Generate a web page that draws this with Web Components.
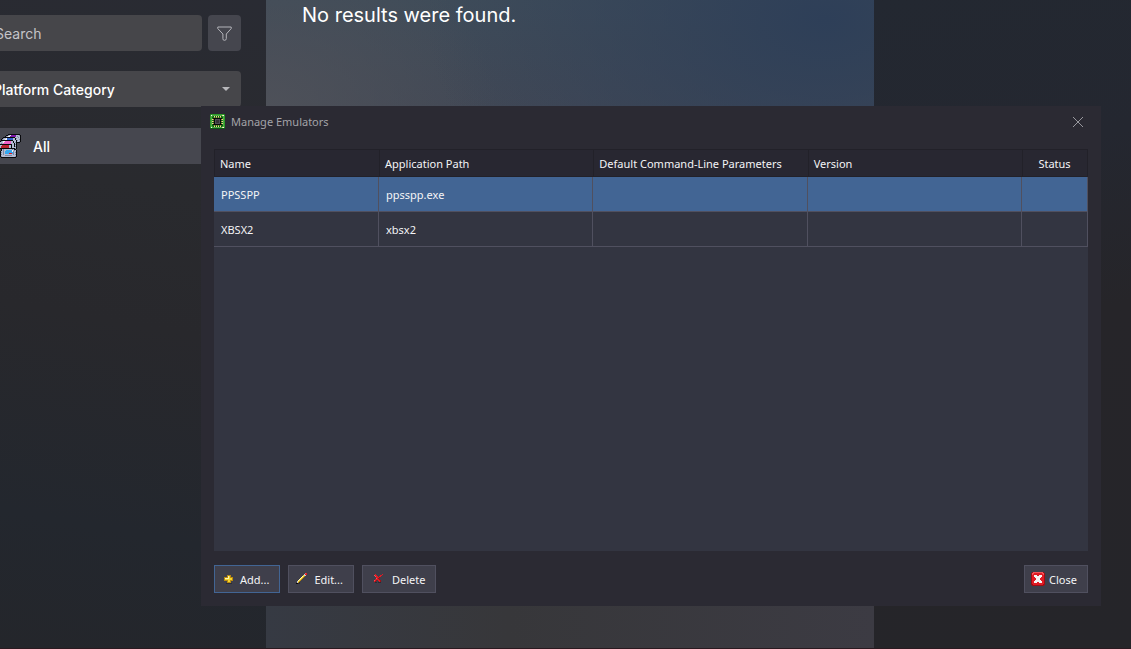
<!DOCTYPE html>
<html lang="en">
<head>
<meta charset="utf-8">
<title>Manage Emulators</title>
<style>
  html, body {
    margin: 0;
    height: 100%;
    overflow: hidden;
    background-color: #24262d;
  }
</style>
</head>
<body>
<launcher-app>
  <side-bar slot="side"></side-bar>
  <results-panel>No results were found.</results-panel>
  <manage-dialog slot="dialog" heading="Manage Emulators">
    <emulator-grid></emulator-grid>
    <tool-button slot="actions" icon="add" focused>Add...</tool-button>
    <tool-button slot="actions" icon="edit">Edit...</tool-button>
    <tool-button slot="actions" icon="remove">Delete</tool-button>
    <tool-button slot="close" icon="close">Close</tool-button>
  </manage-dialog>
</launcher-app>

<script>
// Pixel icons: one character per pixel, looked up in the palette
const PALETTE = {
  k: '#08090c', d: '#0c5a12', D: '#1c7a1a', g: '#2f9a2b', l: '#4fae42', y: '#ecd896', o: '#b09a48',
  c: '#343438', e: '#505055', Y: '#f6d631', W: '#fff6b0', O: '#b98a10', s: '#2b2b34',
  r: '#e01b24', R: '#9c0d14', p: '#f0545a', w: '#f4f4f4', n: '#c9cbd0', v: '#7d16a8',
  b: '#2f62c8', m: '#ef62c8', u: '#b4bdd4', h: '#7d87a3', B: '#35a8f0', x: '#bb2230'
};

const ICONS = {
  chip: [
    'DgggggggggggggD',
    'gwllllllllllywg',
    'glgdydydydydglg',
    'gldDoDoDoDoDdlg',
    'glDkkkkkkkkkDlg',
    'glyokeeeeekoylg',
    'glDdkecccekdDlg',
    'glyokecccekoylg',
    'glDdkecccekdDlg',
    'glyokeeeeekoylg',
    'glDkkkkkkkkkDlg',
    'gldDoDoDoDoDdlg',
    'glgdydydydydglg',
    'gwllllllllllywg',
    'ddddddddddddddd'
  ],
  add: [
    '...............',
    '......OOOO.....',
    '......OWYO.....',
    '...OOOOWYOOO...',
    '...OWWWWYYYO...',
    '...OYYYYYYYO...',
    '...OOOOYYOOO...',
    '......OYYO.....',
    '......OOOO.....',
    '.....ssssss....'
  ],
  edit: [
    '..........pr...',
    '.........nrr...',
    '........Ynn....',
    '.......WYO.....',
    '......WYO......',
    '.....WYO.......',
    '....WYO........',
    '...WYO.........',
    '..nYO..........',
    '..nOs..........',
    '.kkss..........',
    '...............'
  ],
  remove: [
    '...................',
    '......r......r.....',
    '.....prr...rr......',
    '......prr.rr.......',
    '.......rrrR........',
    '.......prR.........',
    '......rrrrR........',
    '.....prR.rrR.......',
    '.....rR...rR.......',
    '......ss.sss.......',
    '...................',
    '...................'
  ],
  close: [
    '.RppppppppppR.',
    'RpprrrrrrrrppR',
    'RprrrrrrrrrrpR',
    'RrrwwwrrwwwrrR',
    'RrrwwwwwwwwrrR',
    'RrrrwwwwwwrrrR',
    'RrrrrwwwwrrrrR',
    'RrrrrwwwwrrrrR',
    'RrrrwwwwwwrrrR',
    'RrrwwwwwwwwrrR',
    'RrrwwwrrwwwrrR',
    'RrrrrrrrrrrrrR',
    'RRrrrrrrrrrrRR',
    '.RRRRRRRRRRRR.'
  ],
  games: [
    '........kkkkkkkkkkkk.',
    '......kkhuwvvvvvuuuhk',
    '.....khuwwvvvvvvuhuuk',
    '...kkkkkkkkkkkkuuuhuk',
    '..khuuwbbbbbbuukhuuuk',
    '.khuuwwbbbbbbuukuuuhk',
    '.kkkkkkkkkkkkuuukhuuk',
    'khuwwmmmmmmuukuukuuhk',
    'uuuwmmmmmmmuukuhkkkk.',
    'uhummmmmmmmuuukuk....',
    'kkkkkkkkkkkkuukhk....',
    'uuxxxxxxxuukuukuk....',
    'uxxxxxxxxuukuukhk....',
    'uxxxxxxxxuukuuuuk....',
    'kkkkkkkkkkkkkkkhk....',
    '.kuhuuuuuuuuhukk.....',
    '.kuhuuBBBBBBwuhuk....',
    'kuuhuBBBBBBBwhuuk....',
    'khuhuBBBBBBBBhuhk....',
    'kuuhuBBBBrrrBhuuk....',
    'khuhuuuuuuuuuhuhk....',
    'kuuuuhhhhhhhuuuuk....',
    'khuuuuuuuuuuuuuhk....',
    '.kkkkkkkkkkkkkkk.....'
  ]
};

class PixelIcon extends HTMLElement {
  constructor() {
    super();
    this.attachShadow({ mode: 'open' });
  }

  connectedCallback() {
    const rows = ICONS[this.getAttribute('name')];
    const width = rows[0].length;
    let rects = '';
    rows.forEach((row, y) => {
      [...row].forEach((key, x) => {
        if (key !== '.') {
          rects += `<rect x="${x}" y="${y}" width="1" height="1" fill="${PALETTE[key]}"/>`;
        }
      });
    });
    this.shadowRoot.innerHTML = `
      <style>
        :host { display: block; flex: none; }
        svg { display: block; }
      </style>
      <svg width="${width}" height="${rows.length}" viewBox="0 0 ${width} ${rows.length}" shape-rendering="crispEdges" aria-hidden="true">${rects}</svg>
    `;
  }
}

class LauncherApp extends HTMLElement {
  constructor() {
    super();
    this.attachShadow({ mode: 'open' }).innerHTML = `
      <style>
        :host {
          display: flex;
          position: relative;
          box-sizing: border-box;
          height: 100vh;
          overflow: hidden;
          border-bottom: 1px solid #2a1a20;
          color: #fff;
          font-family: Inter, "Open Sans", sans-serif;
        }
        .side {
          flex: 0 0 266px;
          min-width: 0;
          background: linear-gradient(190deg, #292b33, #292a2e 30%, #28282c 50%, #23272e 80%, #24262b);
        }
        .main { flex: 1; display: flex; }
        .details {
          flex: 0 0 257px;
          background: linear-gradient(170deg, #232831, #242730 25%, #262529 50%, #252529);
        }
      </style>
      <div class="side"><slot name="side"></slot></div>
      <main class="main"><slot></slot></main>
      <div class="details"></div>
      <slot name="dialog"></slot>
    `;
  }
}

class SideBar extends HTMLElement {
  constructor() {
    super();
    this.attachShadow({ mode: 'open' }).innerHTML = `
      <style>
        :host {
          display: flex;
          flex-direction: column;
          gap: 20px;
          margin-left: -24px;
          padding: 15px 25px 0 0;
          font-size: 14px;
        }
        .row { display: flex; gap: 6px; }
        input, select, button {
          box-sizing: border-box;
          height: 36px;
          margin: 0;
          border: 0;
          border-radius: 4px;
          background-color: #46464a;
          font: inherit;
          color: #fff;
        }
        input { flex: 1; min-width: 0; padding: 0 19px; }
        input::placeholder { color: #c4c4c8; opacity: 1; }
        button {
          display: flex;
          align-items: center;
          justify-content: center;
          width: 33px;
          padding: 0;
          background-color: #45464e;
        }
        .category { display: grid; align-items: center; }
        .category > * { grid-area: 1 / 1; }
        select {
          width: 100%;
          padding: 0 17px;
          appearance: none;
          font-weight: 500;
        }
        .category svg { justify-self: end; margin-right: 11px; pointer-events: none; }
        ul { margin: 0; padding: 0; list-style: none; }
        a {
          display: flex;
          align-items: center;
          gap: 12px;
          height: 36px;
          margin-top: 1px;
          padding-left: 24px;
          background-color: #46474f;
          color: #fff;
          font-weight: 500;
          text-decoration: none;
        }
      </style>
      <div class="row">
        <input type="search" placeholder="Search" aria-label="Search">
        <button type="button" aria-label="Filter">
          <svg width="15" height="15" viewBox="0 0 15 15" fill="none" stroke="#b4b4ba" stroke-linejoin="round">
            <path d="M.8 1h13.4v1.6L9.3 8v4.6q0 1.7-1.8 1.7T5.9 12.6V8L.8 2.6z"/>
          </svg>
        </button>
      </div>
      <div class="category">
        <select aria-label="Category"><option>Platform Category</option></select>
        <svg width="8" height="4" viewBox="0 0 8 4" fill="#b8b8bc"><path d="M0 0h8L4 4z"/></svg>
      </div>
      <ul>
        <li><a href="#all"><pixel-icon name="games"></pixel-icon>All</a></li>
      </ul>
    `;
  }
}

class ResultsPanel extends HTMLElement {
  constructor() {
    super();
    this.attachShadow({ mode: 'open' }).innerHTML = `
      <style>
        :host {
          display: block;
          flex: 1;
          padding: 0 36px;
          font-size: 20px;
          line-height: 30px;
          background:
            radial-gradient(ellipse 400px 260px at 92% 3%, #2e3f58, transparent),
            radial-gradient(ellipse 230px 180px at 0 17%, #4e5159, transparent),
            linear-gradient(90deg, #363a43, #37373a 40%, #3c3b43) 0 100% / 100% 60px no-repeat,
            linear-gradient(180deg, #3f4c59 0, #424855 17%, #363a44 90%);
        }
        p { margin: 0; }
      </style>
      <p><slot></slot></p>
    `;
  }
}

class ManageDialog extends HTMLElement {
  constructor() {
    super();
    this.attachShadow({ mode: 'open' }).innerHTML = `
      <style>
        /* floats over the main window */
        :host {
          position: absolute;
          inset: 106px 30px 42px 201px;
          display: flex;
          flex-direction: column;
          box-sizing: border-box;
          padding: 0 13px 13px;
          background-color: #2b2a33;
          color: #f4f4f6;
          font: 11px/16px "Noto Sans", "Open Sans", sans-serif;
        }
        header {
          display: flex;
          align-items: center;
          gap: 6px;
          height: 31px;
          margin: 0 0 12px -4px;
        }
        h1 { flex: 1; margin: 0; font: inherit; color: #a3a3a8; }
        header button {
          margin: 0;
          padding: 4px;
          border: 0;
          background: none;
        }
        svg { display: block; }
        .body { flex: 1; display: flex; }
        footer { display: flex; gap: 8px; margin-top: 14px; }
        .close { margin-left: auto; }
      </style>
      <header>
        <pixel-icon name="chip"></pixel-icon>
        <h1></h1>
        <button type="button" aria-label="Close window">
          <svg width="12" height="12" viewBox="0 0 12 12" stroke="#98989e"><path d="M1 1l10 10M11 1L1 11"/></svg>
        </button>
      </header>
      <div class="body"><slot></slot></div>
      <footer>
        <slot name="actions"></slot>
        <div class="close"><slot name="close"></slot></div>
      </footer>
    `;
  }

  connectedCallback() {
    this.setAttribute('role', 'dialog');
    this.shadowRoot.querySelector('h1').textContent = this.getAttribute('heading');
  }
}

class EmulatorGrid extends HTMLElement {
  constructor() {
    super();
    this.attachShadow({ mode: 'open' });
    this.emulators = [
      { name: 'PPSSPP', path: 'ppsspp.exe', selected: true },
      { name: 'XBSX2', path: 'xbsx2' }
    ];
    this.render();
  }

  render() {
    const rows = this.emulators.map((item) => `
      <tr class="${item.selected ? 'selected' : ''}">
        <td>${item.name}</td><td>${item.path}</td><td></td><td></td><td></td>
      </tr>`).join('');
    this.shadowRoot.innerHTML = `
      <style>
        :host { display: block; flex: 1; background-color: #333541; }
        table {
          width: 100%;
          table-layout: fixed;
          border-spacing: 0;
        }
        .name { width: 165px; }
        .status { width: 66px; }
        th, td { box-sizing: border-box; padding: 2px 6px 0; text-align: left; }
        th {
          height: 28px;
          border: solid #222129;
          border-width: 1px 0 1px 1px;
          padding-left: 5px;
          background-color: #282731;
          font-weight: 400;
          white-space: nowrap;
        }
        th:last-child { border-right-width: 1px; text-align: center; }
        td {
          height: 35px;
          padding-left: 7px;
          border: solid #50505f;
          border-width: 0 1px 1px 0;
        }
        .selected td { background-color: #426594; }
      </style>
      <table>
        <colgroup><col class="name"><col><col><col><col class="status"></colgroup>
        <thead>
          <tr>
            <th>Name</th>
            <th>Application Path</th>
            <th>Default Command-Line Parameters</th>
            <th>Version</th>
            <th>Status</th>
          </tr>
        </thead>
        <tbody>${rows}</tbody>
      </table>
    `;
  }
}

class ToolButton extends HTMLElement {
  constructor() {
    super();
    this.attachShadow({ mode: 'open' });
  }

  connectedCallback() {
    this.shadowRoot.innerHTML = `
      <style>
        :host { display: block; }
        button {
          display: flex;
          align-items: center;
          gap: 4px;
          height: 28px;
          margin: 0;
          padding: 0 10px 0 6px;
          border: 1px solid #50505f;
          border-radius: 0;
          background-color: #3f3f4b;
          color: inherit;
          font: inherit;
        }
        span { padding-top: 2px; }
        :host([focused]) button { border-color: #426594; }
      </style>
      <button type="button">
        <pixel-icon name="${this.getAttribute('icon')}"></pixel-icon>
        <span><slot></slot></span>
      </button>
    `;
  }
}

customElements.define('pixel-icon', PixelIcon);
customElements.define('launcher-app', LauncherApp);
customElements.define('side-bar', SideBar);
customElements.define('results-panel', ResultsPanel);
customElements.define('manage-dialog', ManageDialog);
customElements.define('emulator-grid', EmulatorGrid);
customElements.define('tool-button', ToolButton);
</script>
</body>
</html>
